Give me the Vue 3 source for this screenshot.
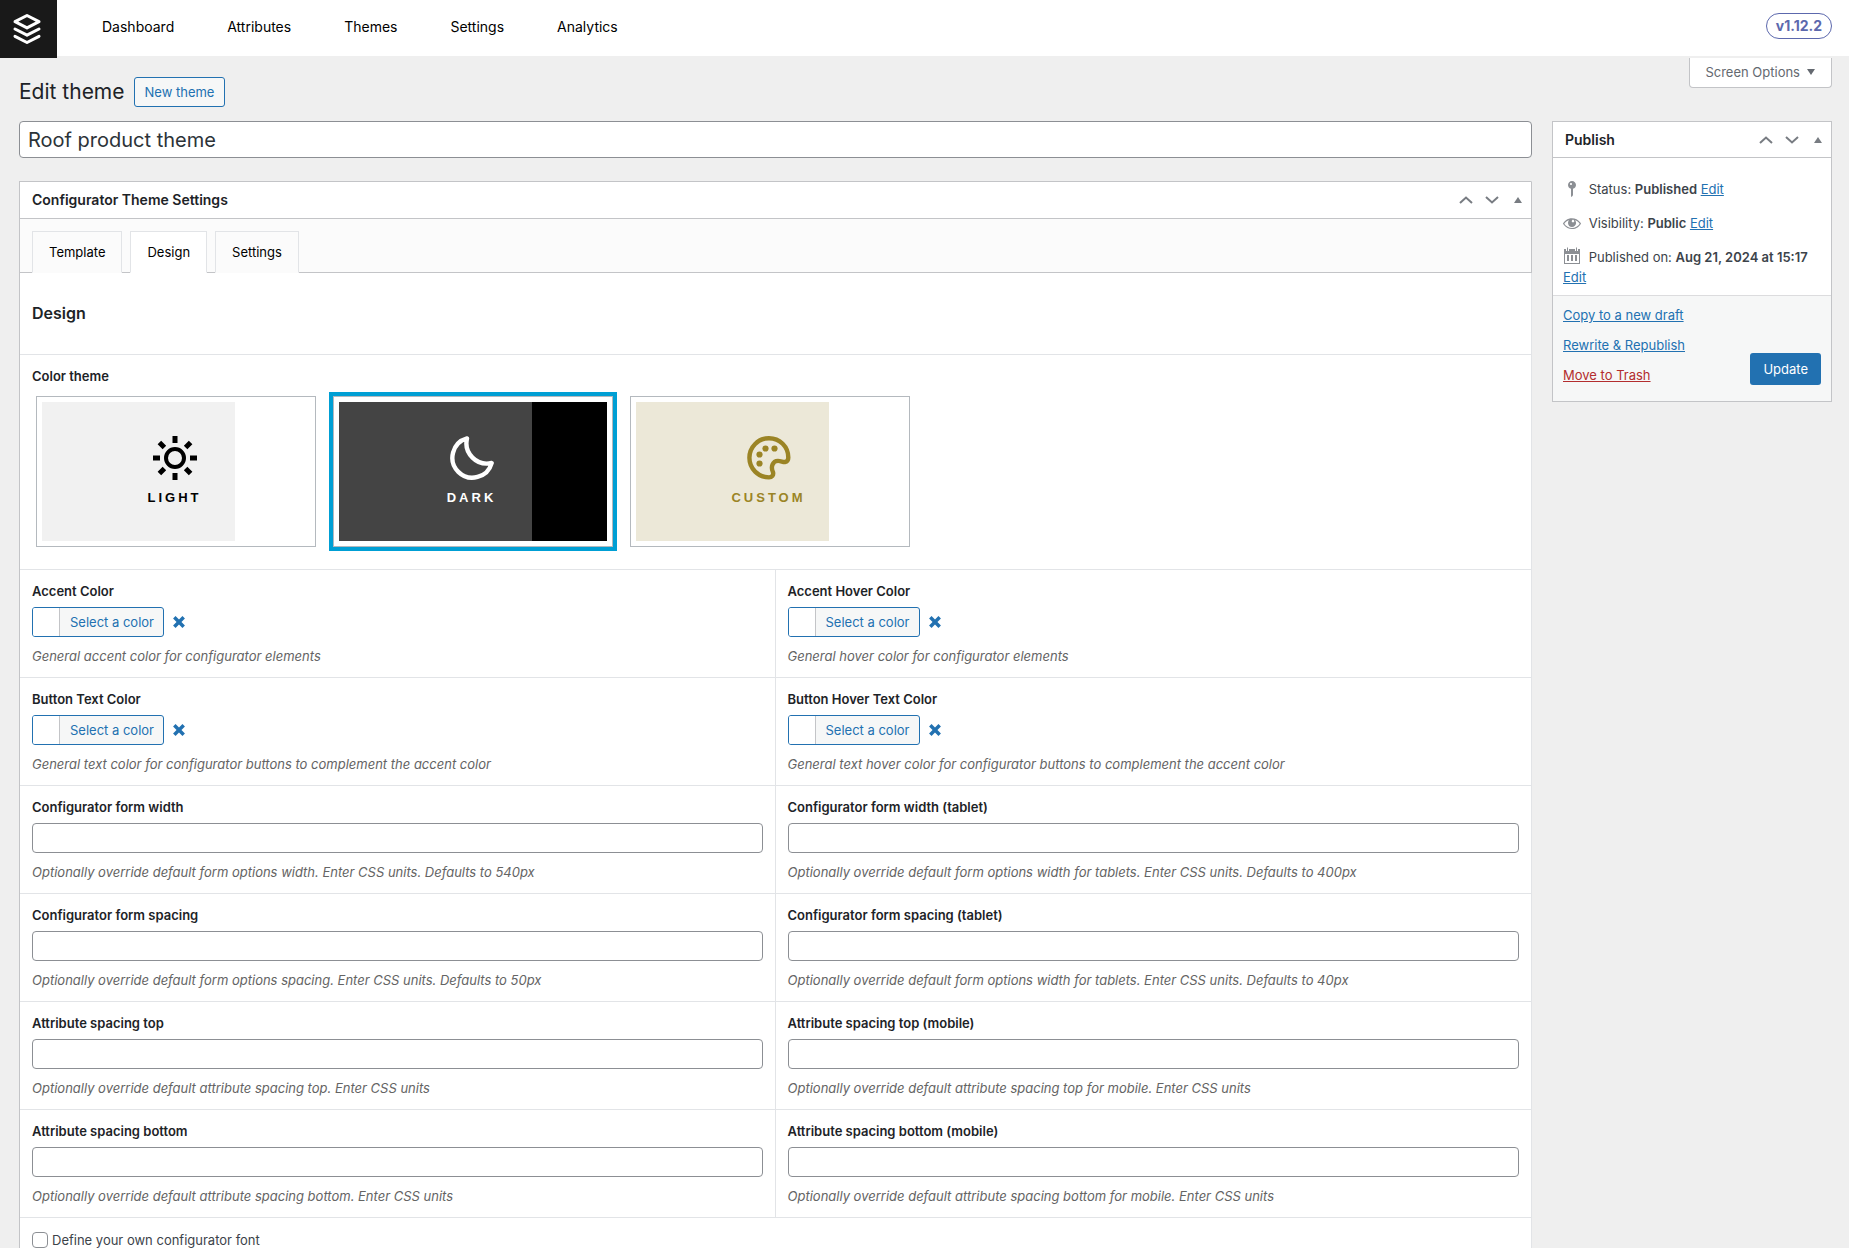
<script setup>
import { ref } from 'vue'

const navItems = ['Dashboard', 'Attributes', 'Themes', 'Settings', 'Analytics']
const tabs = ['Template', 'Design', 'Settings']
const activeTab = ref('Design')
const title = ref('Roof product theme')
const colorTheme = ref('dark')
const themes = ['light', 'dark', 'custom']
const ownFont = ref(false)

const colorFields = [
  { label: 'Accent Color', hint: 'General accent color for configurator elements' },
  { label: 'Accent Hover Color', hint: 'General hover color for configurator elements' },
  { label: 'Button Text Color', hint: 'General text color for configurator buttons to complement the accent color' },
  { label: 'Button Hover Text Color', hint: 'General text hover color for configurator buttons to complement the accent color' },
]

const textFields = [
  { id: 'form-width', label: 'Configurator form width', hint: 'Optionally override default form options width. Enter CSS units. Defaults to 540px' },
  { id: 'form-width-tablet', label: 'Configurator form width (tablet)', hint: 'Optionally override default form options width for tablets. Enter CSS units. Defaults to 400px' },
  { id: 'form-spacing', label: 'Configurator form spacing', hint: 'Optionally override default form options spacing. Enter CSS units. Defaults to 50px' },
  { id: 'form-spacing-tablet', label: 'Configurator form spacing (tablet)', hint: 'Optionally override default form options width for tablets. Enter CSS units. Defaults to 40px' },
  { id: 'attr-top', label: 'Attribute spacing top', hint: 'Optionally override default attribute spacing top. Enter CSS units' },
  { id: 'attr-top-mobile', label: 'Attribute spacing top (mobile)', hint: 'Optionally override default attribute spacing top for mobile. Enter CSS units' },
  { id: 'attr-bottom', label: 'Attribute spacing bottom', hint: 'Optionally override default attribute spacing bottom. Enter CSS units' },
  { id: 'attr-bottom-mobile', label: 'Attribute spacing bottom (mobile)', hint: 'Optionally override default attribute spacing bottom for mobile. Enter CSS units' },
]
</script>

<template>
  <div class="page">
    <header class="topbar">
      <a href="#" class="logo" aria-label="Home">
        <svg width="30" height="32" viewBox="0 0 30 32" fill="none" stroke="#fff" stroke-width="3" stroke-linejoin="round" stroke-linecap="round">
          <path d="M15 2.5 27 8.7 15 14.9 3 8.7z" />
          <path d="M3 16 15 22.2 27 16" />
          <path d="M3 23.3 15 29.5 27 23.3" />
        </svg>
      </a>
      <nav class="nav">
        <a v-for="item in navItems" :key="item" href="#">{{ item }}</a>
      </nav>
      <span class="version">v1.12.2</span>
    </header>

    <div class="heading-row">
      <h1>Edit theme</h1>
      <a href="#" class="btn-outline">New theme</a>
      <button type="button" class="screen-options">
        Screen Options
        <svg width="8" height="6" viewBox="0 0 8 6"><path d="M0 0h8L4 6z" fill="currentColor" /></svg>
      </button>
    </div>

    <div class="columns">
      <main class="main">
        <input v-model="title" type="text" class="title-input" aria-label="Theme title" />

        <section class="box settings">
          <div class="box-head">
            <h2>Configurator Theme Settings</h2>
            <div class="handles">
              <button type="button" aria-label="Move up"><svg width="14" height="8" viewBox="0 0 14 8"><path d="M1 7l6-5.5L13 7" /></svg></button>
              <button type="button" aria-label="Move down"><svg width="14" height="8" viewBox="0 0 14 8"><path d="M1 1l6 5.5L13 1" /></svg></button>
              <button type="button" aria-label="Toggle panel"><svg class="tri" width="8" height="6" viewBox="0 0 8 6"><path d="M0 6h8L4 0z" /></svg></button>
            </div>
          </div>

          <div class="tabs">
            <button v-for="tab in tabs" :key="tab" type="button" :class="{ active: tab === activeTab }" @click="activeTab = tab">{{ tab }}</button>
          </div>

          <h3 class="section-title">Design</h3>

          <fieldset class="theme-field">
            <legend>Color theme</legend>
            <div class="cards">
              <label v-for="t in themes" :key="t" class="card" :class="[t, { selected: colorTheme === t }]">
                <input v-model="colorTheme" type="radio" name="color-theme" :value="t" />
                <span class="preview">
                  <svg v-if="t === 'light'" width="44" height="44" viewBox="0 0 44 44" fill="none" stroke="currentColor" stroke-width="4">
                    <circle cx="22" cy="22" r="9" />
                    <path stroke-width="5" d="M22 0v7M22 37v7M0 22h7M37 22h7M6.4 6.4l5 5M32.6 32.6l5 5M6.4 37.6l5-5M32.6 11.4l5-5" />
                  </svg>
                  <svg v-else-if="t === 'dark'" width="44" height="44" viewBox="0 0 44 44" fill="none" stroke="currentColor" stroke-width="4.4" stroke-linejoin="round">
                    <path d="M17 2.4A20 20 0 1 0 41.7 27 20.5 20.5 0 0 1 17 2.4z" />
                  </svg>
                  <svg v-else width="44" height="44" viewBox="0 0 44 44">
                    <path fill="none" stroke="currentColor" stroke-width="4.4" d="M22 2.2A19.6 19.6 0 0 0 22 41.4C25 41.4 26.8 39 26 36.2C23.5 31 25.5 25 31 24.9C34 24.9 35.8 26.2 38 26C40 25.7 41.3 24 41.3 21.5C41.3 10.5 32.7 2.2 22 2.2z" />
                    <g fill="currentColor">
                      <circle cx="18.5" cy="12.5" r="3.1" /><circle cx="27.5" cy="12.5" r="3.1" />
                      <circle cx="12.5" cy="18.5" r="3.1" /><circle cx="12.5" cy="27.5" r="3.1" />
                    </g>
                  </svg>
                  <span class="card-name">{{ t.toUpperCase() }}</span>
                </span>
              </label>
            </div>
          </fieldset>

          <div class="grid">
            <div v-for="f in colorFields" :key="f.label" class="field">
              <span class="label">{{ f.label }}</span>
              <div class="picker">
                <button type="button" class="select-color" :aria-label="f.label">
                  <span class="swatch"></span>
                  <span class="select-text">Select a color</span>
                </button>
                <button type="button" class="clear" aria-label="Clear color">
                  <svg width="12" height="12" viewBox="0 0 11 11"><path d="M1.2 1.2l8.6 8.6M9.8 1.2l-8.6 8.6" stroke="currentColor" stroke-width="3.2" /></svg>
                </button>
              </div>
              <p class="hint">{{ f.hint }}</p>
            </div>
            <div v-for="f in textFields" :key="f.id" class="field">
              <label class="label" :for="f.id">{{ f.label }}</label>
              <input :id="f.id" type="text" class="text-input" />
              <p class="hint">{{ f.hint }}</p>
            </div>
          </div>

          <label class="check-row">
            <input v-model="ownFont" type="checkbox" />
            Define your own configurator font
          </label>
        </section>
      </main>

      <aside class="box publish">
        <div class="box-head">
          <h2>Publish</h2>
          <div class="handles">
            <button type="button" aria-label="Move up"><svg width="14" height="8" viewBox="0 0 14 8"><path d="M1 7l6-5.5L13 7" /></svg></button>
            <button type="button" aria-label="Move down"><svg width="14" height="8" viewBox="0 0 14 8"><path d="M1 1l6 5.5L13 1" /></svg></button>
            <button type="button" aria-label="Toggle panel"><svg class="tri" width="8" height="6" viewBox="0 0 8 6"><path d="M0 6h8L4 0z" /></svg></button>
          </div>
        </div>
        <div class="info">
          <p>
            <svg width="20" height="20" viewBox="0 0 20 20"><path d="M14 6c0 1.86-1.28 3.41-3 3.86V16c0 1-2 2-2 2V9.86c-1.72-.45-3-2-3-3.86 0-2.21 1.79-4 4-4s4 1.79 4 4zM8 5c0 .55.45 1 1 1s1-.45 1-1-.45-1-1-1-1 .45-1 1z" /></svg>
            Status: <strong>Published</strong> <a href="#">Edit</a>
          </p>
          <p>
            <svg width="20" height="20" viewBox="0 0 20 20"><path d="M18.3 9.5C15 4.9 8.5 3.8 3.9 7.2c-1.2.9-2.2 2.1-3 3.4.2.4.5.8.8 1.2 3.3 4.6 9.6 5.6 14.2 2.4.9-.7 1.7-1.4 2.4-2.4.3-.4.5-.8.8-1.2-.3-.4-.5-.8-.8-1.1zm-8.2-2.3c.5-.5 1.3-.5 1.8 0s.5 1.3 0 1.8-1.3.5-1.8 0-.5-1.3 0-1.8zm-.1 7.7c-3.100 0-6-1.600-7.700-4.200C3.500 9 5.100 7.800 7 7.200c-.7.8-1 1.700-1 2.700 0 2.200 1.700 4.100 4 4.100 2.200 0 4.100-1.700 4.100-4v-.1c0-1-.4-2-1.100-2.700 1.900.6 3.500 1.800 4.700 3.500-1.700 2.600-4.600 4.200-7.700 4.200z" /></svg>
            Visibility: <strong>Public</strong> <a href="#">Edit</a>
          </p>
          <p>
            <svg width="20" height="20" viewBox="-1 0 20 20"><path fill-rule="evenodd" d="M1 2h2v2h3V2h6v2h3V2h2v15H1zM2 7v9h14V7z" /><path d="M4 .5h1V4H4zM13 .5h1V4h-1zM4 8h2v6H4zM8 8h2v6H8zM12 8h2v6h-2z" /></svg>
            Published on: <strong>Aug 21, 2024 at 15:17</strong> <a href="#">Edit</a>
          </p>
        </div>
        <div class="actions">
          <div class="links">
            <a href="#">Copy to a new draft</a>
            <a href="#">Rewrite &amp; Republish</a>
            <a href="#" class="trash">Move to Trash</a>
          </div>
          <button type="button" class="update">Update</button>
        </div>
      </aside>
    </div>
  </div>
</template>

<style>
body {
  margin: 0;
  background: #efefef;
}
</style>

<style scoped>
.page,
.page * {
  box-sizing: border-box;
}
.page {
  font-family: Inter, 'Liberation Sans', sans-serif;
  font-size: 13px;
  line-height: 20px;
  color: #3c434a;
}
button,
input {
  font: inherit;
  margin: 0;
}
button {
  padding: 0;
  border: 0;
  background: none;
}
h1,
h2,
h3,
p {
  margin: 0;
}
a {
  color: #2271b1;
}
svg {
  display: block;
}

.topbar {
  display: flex;
  height: 56px;
  background: #fff;
  padding-right: 17px;
}
.logo {
  display: flex;
  align-items: center;
  width: 57px;
  height: 58px;
  padding-left: 12px;
  background: #191919;
}
.nav {
  display: flex;
  flex: 1;
  gap: 53px;
  padding: 17px 0 0 45px;
  font-size: 14px;
}
.nav a {
  color: #000;
  text-decoration: none;
}
.version {
  align-self: flex-start;
  margin-top: 13px;
  padding: 0 9px;
  height: 26px;
  border: 1px solid #5c68ad;
  border-radius: 13px;
  line-height: 24px;
  font-size: 14px;
  font-weight: 700;
  color: #5c68ad;
}

.heading-row {
  display: flex;
  align-items: flex-start;
  height: 65px;
  padding: 0 17px 0 19px;
}
h1 {
  margin: 21px 9px 0 0;
  font-size: 21px;
  line-height: 30px;
  font-weight: 400;
  color: #1d2327;
}
.btn-outline {
  margin-top: 21px;
  height: 30px;
  padding: 0 10px;
  border: 1px solid #2271b1;
  border-radius: 3px;
  background: #f6f7f7;
  line-height: 28px;
  text-decoration: none;
}
.screen-options {
  display: flex;
  align-items: center;
  gap: 7px;
  height: 30px;
  margin: 2px 0 0 auto;
  padding: 0 16px 2px 15px;
  border: 1px solid #c3c4c7;
  border-top: 0;
  border-radius: 0 0 4px 4px;
  background: #fff;
  color: #646970;
}

.columns {
  display: flex;
  align-items: flex-start;
  gap: 20px;
  padding: 0 17px 0 19px;
}
.main {
  flex: 1;
  min-width: 0;
}
.title-input {
  display: block;
  width: 100%;
  height: 37px;
  margin-bottom: 23px;
  padding: 0 8px;
  border: 1px solid #8c8f94;
  border-radius: 4px;
  background: #fff;
  font-size: 20px;
  color: #2c3338;
}

.box {
  border: 1px solid #c3c4c7;
  background: #fff;
}
.settings {
  border-bottom: 0;
  border-right-color: #e2e4e7;
}
.box-head {
  display: flex;
  align-items: center;
  justify-content: space-between;
  height: 37px;
  border-bottom: 1px solid #c3c4c7;
  padding-left: 12px;
}
.settings .box-head,
.tabs {
  margin-right: -1px;
  border-right: 1px solid #c3c4c7;
}
h2 {
  font-size: 14px;
  font-weight: 600;
  color: #1d2327;
}
.handles {
  display: flex;
}
.handles button {
  display: flex;
  align-items: center;
  justify-content: center;
  width: 26px;
  height: 36px;
}
.handles path {
  fill: none;
  stroke: #787c82;
  stroke-width: 2;
}
.handles .tri path {
  fill: #787c82;
  stroke: none;
}

.tabs {
  display: flex;
  gap: 8px;
  height: 54px;
  padding: 12px 12px 0;
  border-bottom: 1px solid #c3c4c7;
  background: #fbfbfb;
}
.tabs button {
  height: 42px;
  padding: 0 16px;
  border: 1px solid #e2e4e7;
  border-bottom-color: #fbfbfb;
  background: #fbfbfb;
  color: #000;
}
.tabs button.active {
  border-bottom-color: #fff;
  background: #fff;
}
.section-title {
  padding: 30px 12px;
  height: 81px;
  font-size: 16px;
  line-height: 20px;
  font-weight: 600;
  color: #1d2327;
}

.theme-field {
  margin: 0;
  padding: 11px 12px 22px;
  border: 0;
  border-top: 1px solid #e2e4e7;
  min-width: 0;
}
.theme-field legend {
  float: left;
  width: 100%;
  padding: 0;
  font-weight: 600;
  color: #1d2327;
}
.cards {
  clear: both;
  display: flex;
  gap: 17px;
  padding: 10px 4px 0;
}
.card {
  display: block;
  width: 280px;
  height: 151px;
  padding: 5px;
  border: 1px solid #b4b9be;
}
.card.selected {
  outline: 4px solid #009fd4;
}
.card input {
  position: absolute;
  opacity: 0;
}
.preview {
  display: flex;
  flex-direction: column;
  align-items: center;
  height: 139px;
  padding: 34px 3px 0 0;
}
.light .preview {
  background: linear-gradient(90deg, #f1f1f1 193px, #fff 193px);
  color: #000;
}
.dark .preview {
  background: linear-gradient(90deg, #444 193px, #000 193px);
  color: #fff;
}
.custom .preview {
  background: linear-gradient(90deg, #ece8d8 193px, #fff 193px);
  color: #9b8425;
}
.card-name {
  margin-top: 8px;
  font-family: 'Liberation Sans', Arial, sans-serif;
  font-size: 13px;
  font-weight: 700;
  letter-spacing: 3px;
}

.grid {
  display: grid;
  grid-template-columns: 1fr 1fr;
}
.field {
  height: 108px;
  padding: 11px 12px 0;
  border-top: 1px solid #e2e4e7;
}
.field:nth-child(odd) {
  border-right: 1px solid #e2e4e7;
}
.label {
  display: block;
  margin-bottom: 6px;
  font-weight: 600;
  color: #1d2327;
}
.picker {
  display: flex;
}
.select-color {
  display: flex;
  height: 30px;
  border: 1px solid #2271b1;
  border-radius: 3px;
  background: #f6f7f7;
  color: #2271b1;
  overflow: hidden;
}
.swatch {
  width: 27px;
  height: 28px;
  border-right: 1px solid #c3c4c7;
  background: #fff;
}
.select-text {
  padding: 0 9px 0 10px;
  line-height: 28px;
}
.clear {
  display: flex;
  align-items: center;
  padding: 0 9px;
  color: #2271b1;
}
.text-input {
  display: block;
  width: 100%;
  height: 30px;
  padding: 0 8px;
  border: 1px solid #8c8f94;
  border-radius: 4px;
  background: #fff;
}
.hint {
  margin-top: 9px;
  font-style: italic;
  color: #646464;
}
.check-row {
  display: flex;
  align-items: center;
  gap: 4px;
  padding: 12px 12px 0;
  border-top: 1px solid #e2e4e7;
}
.check-row input {
  appearance: none;
  width: 16px;
  height: 16px;
  border: 1px solid #8c8f94;
  border-radius: 4px;
  background: #fff;
}

.publish {
  width: 280px;
}
.publish .box-head {
  height: 36px;
}
.info {
  padding: 21px 10px 8px;
}
.info p {
  margin-bottom: 14px;
}
.info p:last-child {
  margin-bottom: 0;
}
.info svg {
  display: inline-block;
  margin: 0 3px 0 -1px;
  vertical-align: top;
  fill: #8c8f94;
}
.info strong {
  font-weight: 600;
}
.actions {
  display: flex;
  justify-content: space-between;
  align-items: flex-end;
  padding: 9px 10px 16px;
  border-top: 1px solid #dcdcde;
  background: #f6f7f7;
}
.links {
  display: flex;
  flex-direction: column;
  gap: 10px;
}
.trash {
  color: #b32d2e;
}
.update {
  height: 32px;
  padding: 0 13px;
  border-radius: 3px;
  background: #2271b1;
  color: #fff;
}
</style>
